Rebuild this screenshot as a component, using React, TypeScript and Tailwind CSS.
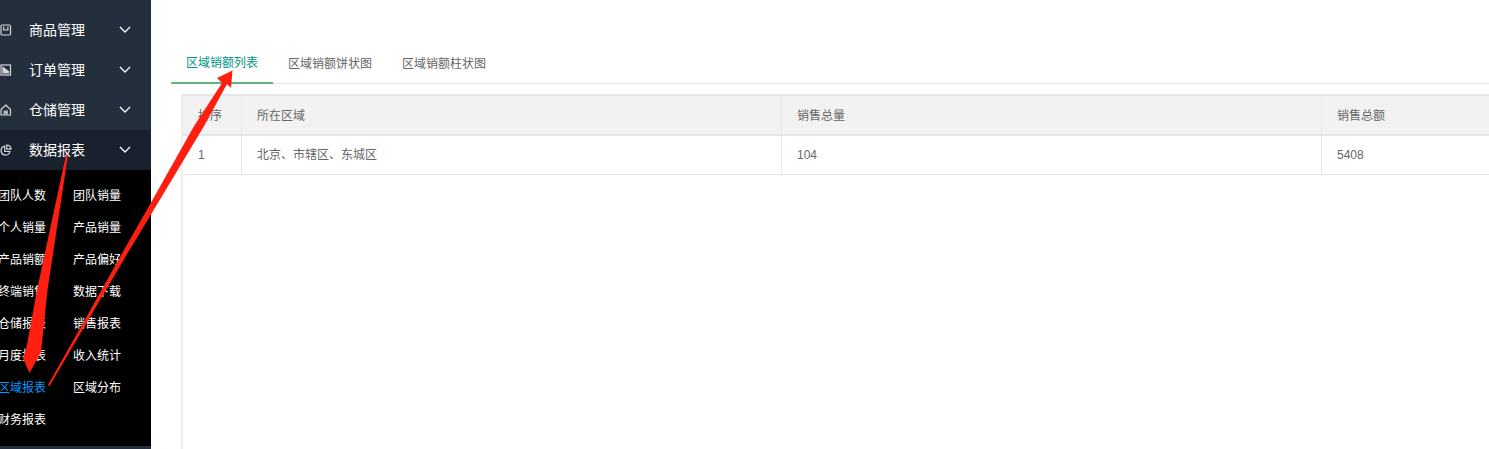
import React from "react";

const font = { fontFamily: '"Liberation Sans","Noto Sans CJK SC",sans-serif' };

function Chevron() {
  return (
    <svg width="12" height="7" viewBox="0 0 12 7" fill="none" stroke="#fff" strokeWidth="1.3" className="shrink-0 -mt-[1px]">
      <path d="M1 1l5 5 5-5" />
    </svg>
  );
}

const icons: Record<string, React.ReactNode> = {
  shop: (
    <>
      <rect x="1" y="1" width="9.5" height="10" rx="1.2" />
      <path d="M3.700 2.500v3.500h4.200V2.500" />
    </>
  ),
  order: (
    <>
      <rect x="1" y="1" width="9.500" height="10" />
      <path d="M3 3.500l5.500 4v1.500H3z" fill="#d5d8dc" />
    </>
  ),
  home: (
    <>
      <path d="M5.800 1L10.500 5.500V11H1V5.500Z" />
      <rect x="3.500" y="6.500" width="4.500" height="4" fill="#aeb3ba" stroke="none" />
    </>
  ),
  pie: (
    <>
      <path d="M4.700 2.200a4.500 4.500 0 1 0 5.300 5.300H4.700z" />
      <path d="M6.800 1v4.200H11A4.200 4.200 0 0 0 6.800 1z" />
    </>
  ),
};

function NavRow({ icon, label, active }: { icon: string; label: string; active?: boolean }) {
  return (
    <div className={`h-10 flex items-center shrink-0 ${active ? "bg-[#1a212e]" : ""}`}>
      <svg width="12" height="12" viewBox="0 0 12 12" fill="none" stroke="#d5d8dc" strokeWidth="1.2" className="shrink-0">
        {icons[icon]}
      </svg>
      <span className="ml-[17px] w-[90px] text-sm text-white">{label}</span>
      <Chevron />
    </div>
  );
}

const sub = [
  ["团队人数", "团队销量"],
  ["个人销量", "产品销量"],
  ["产品销额", "产品偏好"],
  ["终端销售", "数据下载"],
  ["仓储报表", "销售报表"],
  ["月度报表", "收入统计"],
  ["区域报表", "区域分布"],
  ["财务报表", ""],
];

const cols = ["w-[59px]", "w-[540px]", "w-[540px]", "w-[300px]"];
const headers = ["排序", "所在区域", "销售总量", "销售总额"];
const row = ["1", "北京、市辖区、东城区", "104", "5408"];

export default function App() {
  return (
    <div style={font} className="relative w-[1489px] h-[449px] overflow-hidden bg-white flex">
      <aside className="w-[151px] h-full shrink-0 bg-[#242f3d] flex flex-col pt-[10px]">
        <NavRow icon="shop" label="商品管理" />
        <NavRow icon="order" label="订单管理" />
        <NavRow icon="home" label="仓储管理" />
        <NavRow icon="pie" label="数据报表" active />
        <div className="bg-black h-[276px] pt-[10px] shrink-0">
          <div className="grid grid-cols-[75px_75px] -ml-[2px] auto-rows-[32px] text-xs text-white items-center">
            {sub.flat().map((t, i) => (
              <span key={i} className={t === "区域报表" ? "text-[#0099ff]" : ""}>
                {t}
              </span>
            ))}
          </div>
        </div>
      </aside>

      <main className="flex-1 min-w-0 pl-5 pt-[44px] flex flex-col overflow-hidden">
        <div className="flex h-[40px] border-b border-[#e6e6e6] text-xs text-[#666] shrink-0">
          <div className="w-[102px] h-[40px] flex items-center justify-center border-b-2 border-[#5fb878] text-[#009688] pb-[1px]">
            区域销额列表
          </div>
          <div className="w-[114px] h-[39px] flex items-center justify-center">区域销额饼状图</div>
          <div className="w-[114px] h-[39px] flex items-center justify-center">区域销额柱状图</div>
        </div>
        <div className="ml-[10px] mt-[10px] flex-1 border-l-2 border-[#ededed] text-xs text-[#666]">
          <div className="flex h-[42px] bg-[#f2f2f2] border-y-2 border-[#e6e6e6] w-[1400px] items-stretch">
            {headers.map((h, i) => (
              <div key={h} className={`${cols[i]} shrink-0 flex items-center pl-[15px] pt-[1px] border-r border-[#e6e6e6]`}>
                {h}
              </div>
            ))}
          </div>
          <div className="flex h-[39px] border-b border-[#e6e6e6] w-[1400px] items-stretch">
            {row.map((c, i) => (
              <div key={i} className={`${cols[i]} shrink-0 flex items-center pl-[15px] border-r border-[#e6e6e6]`}>
                {c}
              </div>
            ))}
          </div>
        </div>
      </main>

      {/* hand-drawn red annotation arrows over the page */}
      <svg className="absolute inset-0 pointer-events-none" width="1489" height="449" viewBox="0 0 1489 449">
        <path d="M66 155L68 155L47.500 290L41 352L29.500 373L23 358L27 345L37 290Z" fill="#ff1f10" />
        <path d="M48 385L96 300L124 250L148.500 207L193.500 127L222 83L217 78L232.500 70.500L231 88L227 84L203.500 127L155.500 207L129.500 250L100 300L49.500 386Z" fill="#ff1f10" />
      </svg>
    </div>
  );
}
